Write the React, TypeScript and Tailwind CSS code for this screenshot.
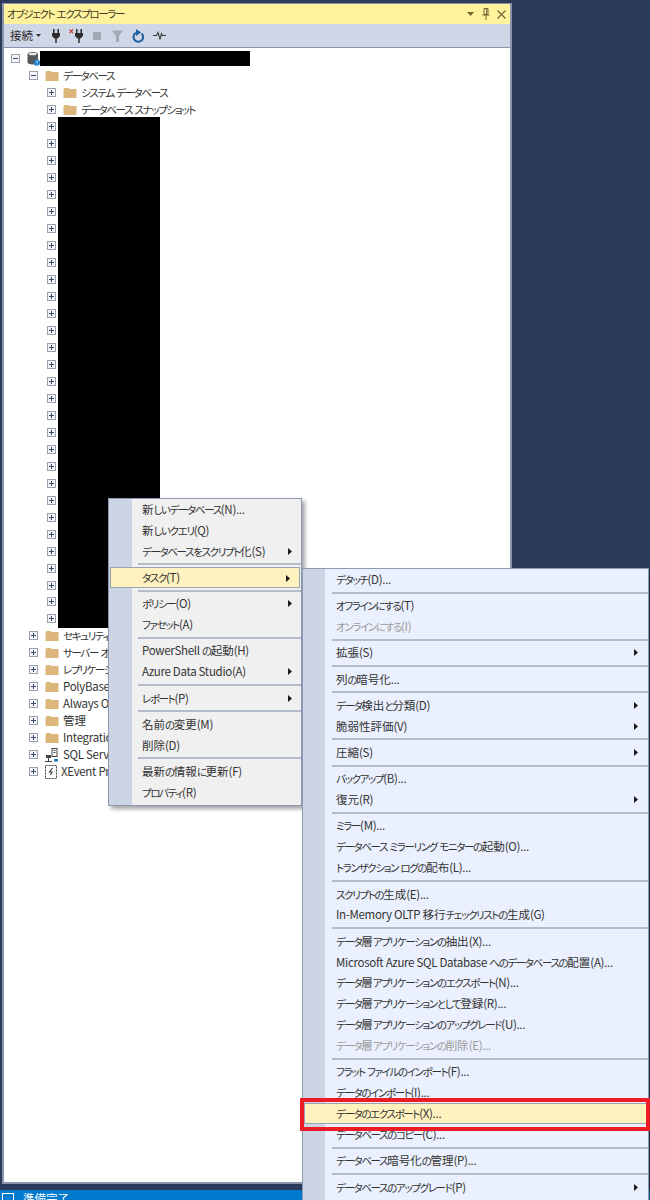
type MenuEntry =
  | { sep: true }
  | { label: string; arrow?: boolean; disabled?: boolean; active?: boolean };

const firstMenu: MenuEntry[] = [
  { label: "新しいデータベース(N)..." },
  { label: "新しいクエリ(Q)" },
  { label: "データベースをスクリプト化(S)", arrow: true },
  { sep: true },
  { label: "タスク(T)", arrow: true, active: true },
  { sep: true },
  { label: "ポリシー(O)", arrow: true },
  { label: "ファセット(A)" },
  { sep: true },
  { label: "PowerShell の起動(H)" },
  { label: "Azure Data Studio(A)", arrow: true },
  { sep: true },
  { label: "レポート(P)", arrow: true },
  { sep: true },
  { label: "名前の変更(M)" },
  { label: "削除(D)" },
  { sep: true },
  { label: "最新の情報に更新(F)" },
  { label: "プロパティ(R)" },
];

const taskMenu: MenuEntry[] = [
  { label: "デタッチ(D)..." },
  { sep: true },
  { label: "オフラインにする(T)" },
  { label: "オンラインにする(I)", disabled: true },
  { sep: true },
  { label: "拡張(S)", arrow: true },
  { sep: true },
  { label: "列の暗号化..." },
  { sep: true },
  { label: "データ検出と分類(D)", arrow: true },
  { label: "脆弱性評価(V)", arrow: true },
  { sep: true },
  { label: "圧縮(S)", arrow: true },
  { sep: true },
  { label: "バックアップ(B)..." },
  { label: "復元(R)", arrow: true },
  { sep: true },
  { label: "ミラー(M)..." },
  { label: "データベース ミラーリング モニターの起動(O)..." },
  { label: "トランザクション ログの配布(L)..." },
  { sep: true },
  { label: "スクリプトの生成(E)..." },
  { label: "In-Memory OLTP 移行チェックリストの生成(G)" },
  { sep: true },
  { label: "データ層アプリケーションの抽出(X)..." },
  { label: "Microsoft Azure SQL Database へのデータベースの配置(A)..." },
  { label: "データ層アプリケーションのエクスポート(N)..." },
  { label: "データ層アプリケーションとして登録(R)..." },
  { label: "データ層アプリケーションのアップグレード(U)..." },
  { label: "データ層アプリケーションの削除(E)...", disabled: true },
  { sep: true },
  { label: "フラット ファイルのインポート(F)..." },
  { label: "データのインポート(I)..." },
  { label: "データのエクスポート(X)...", active: true },
  { label: "データベースのコピー(C)..." },
  { sep: true },
  { label: "データベース暗号化の管理(P)..." },
  { sep: true },
  { label: "データベースのアップグレード(P)", arrow: true },
];

const bottomNodes: { label: string; icon: "folder" | "agent" | "xevent" }[] = [
  { label: "セキュリティ", icon: "folder" },
  { label: "サーバー オブジェクト", icon: "folder" },
  { label: "レプリケーション", icon: "folder" },
  { label: "PolyBase", icon: "folder" },
  { label: "Always On", icon: "folder" },
  { label: "管理", icon: "folder" },
  { label: "Integration Services", icon: "folder" },
  { label: "SQL Server エージェント", icon: "agent" },
  { label: "XEvent Profiler", icon: "xevent" },
];

// Meiryo UI has narrow kana, so kana runs get squeezed by hand
function Label({ text }: { text: string }) {
  const runs = text.match(/[\u3040-\u30ff]+|[\u0020-\u007e]+|[^\u3040-\u30ff\u0020-\u007e]+/g) ?? [];
  return (
    <span>
      {runs.map((run, i) => {
        if (/^[\u3040-\u30ff]/.test(run)) {
          return <span key={i} className="text-[10.5px] tracking-[-1.35px]">{run}</span>;
        }
        if (/^[\u0020-\u007e]/.test(run)) {
          return <span key={i} className="tracking-[-0.3px]">{run}</span>;
        }
        return <span key={i}>{run}</span>;
      })}
    </span>
  );
}

function Expander({ open }: { open?: boolean }) {
  return (
    <svg width="9" height="9" viewBox="0 0 9 9" className="flex-shrink-0">
      <rect x="0.5" y="0.5" width="8" height="8" fill="#f4f5f8" stroke="#9aa0ad" />
      <path d="M2 4.5h5" stroke="#3b4a6b" />
      {!open && <path d="M4.5 2v5" stroke="#3b4a6b" />}
    </svg>
  );
}

function Folder() {
  return (
    <svg width="14" height="12" viewBox="0 0 14 12" className="flex-shrink-0">
      <path d="M0.5 2.5 L1.5 1 H5.5 L6.5 2 H13.5 V11 H0.5 Z" fill="#dcb67a" />
    </svg>
  );
}

function AgentIcon() {
  return (
    <svg width="14" height="14" viewBox="0 0 14 14" className="flex-shrink-0">
      <rect x="7" y="0.5" width="5" height="8" fill="#fff" stroke="#424242" />
      <path d="M8.5 2.5h2M8.5 4.5h2" stroke="#424242" />
      <rect x="1" y="7" width="5" height="3" fill="#424242" />
      <path d="M0 13.5h7M3.5 10v3" stroke="#424242" />
      <path d="M9 11h4v2.5H9z" fill="#1a7bc4" />
    </svg>
  );
}

function XEventIcon() {
  return (
    <svg width="12" height="14" viewBox="0 0 12 14" className="flex-shrink-0">
      <rect x="0.5" y="0.5" width="11" height="13" fill="#fff" stroke="#424242" strokeDasharray="2 1" />
      <path d="M7.5 3 L4.5 7 H7 L5.5 10" fill="none" stroke="#424242" strokeWidth="1.2" />
    </svg>
  );
}

function ServerIcon() {
  return (
    <svg width="13" height="15" viewBox="0 0 13 15" className="flex-shrink-0">
      <path d="M0.5 3 C0.5 0.2 11 0.2 11 3 V11.5 C11 14 0.5 14 0.5 11.5 Z" fill="#55565a" />
      <ellipse cx="5.7" cy="3" rx="4.2" ry="1.3" fill="#e6e6e6" />
      <circle cx="9.8" cy="11.6" r="3.2" fill="#1c7fc9" />
      <path d="M8.9 10.6 C9.2 9.9 10.7 9.9 10.7 11 C10.7 11.7 9.8 11.7 9.8 12.4 M9.8 13v.5" fill="none" stroke="#fff" strokeWidth="0.7" />
    </svg>
  );
}

function TreeRow({ indent, open, children }: { indent: string; open?: boolean; children: React.ReactNode }) {
  return (
    <div className={`flex h-[16.97px] items-center whitespace-nowrap ${indent}`}>
      <Expander open={open} />
      {children}
    </div>
  );
}

function ToolbarIcons() {
  return (
    <div className="ml-[11px] flex items-center">
      <svg width="8" height="14" viewBox="0 0 8 14">
        <path d="M1.8 0v4M6.2 0v4" stroke="#2d2d2d" strokeWidth="1.5" />
        <path d="M0 4h8v3L5.5 9.5h-3L0 7Z" fill="#2d2d2d" />
        <path d="M4 9v5" stroke="#2d2d2d" strokeWidth="1.5" />
      </svg>
      <svg width="14" height="14" viewBox="0 0 14 14" className="ml-[9px]">
        <path d="M0.5 0.5 L4 4M4 0.5 L0.5 4" stroke="#c4453c" strokeWidth="1.1" />
        <path d="M7.8 0v4M12.2 0v4" stroke="#2d2d2d" strokeWidth="1.5" />
        <path d="M6 4h8v3L11.5 9.5h-3L6 7Z" fill="#2d2d2d" />
        <path d="M10 9v5" stroke="#2d2d2d" strokeWidth="1.5" />
      </svg>
      <div className="ml-[10px] h-[8px] w-[8px] bg-[#a5a9b3]" />
      <svg width="11" height="12" viewBox="0 0 11 12" className="ml-[11px]">
        <path d="M0 0.5h11L7 6v6H4V6Z" fill="#a5a9b3" />
      </svg>
      <svg width="12" height="14" viewBox="0 0 12 14" className="ml-[9px]">
        <path d="M4 3.8 A4.8 4.8 0 1 0 9.5 4.4" fill="none" stroke="#1c5f9e" strokeWidth="2" />
        <path d="M5 0 L5 7 L10 3.5 Z" fill="#1c5f9e" transform="translate(-1 0)" />
      </svg>
      <svg width="13" height="9" viewBox="0 0 13 9" className="ml-[9px]">
        <path d="M0 4.5h3.5L5 1.5 7 8 8.5 2.5l1 2H13" fill="none" stroke="#3a3a3a" strokeWidth="1.1" />
      </svg>
    </div>
  );
}

function ContextMenu({ items, className, gutter, text, arrowRight, tone }: {
  items: MenuEntry[];
  className: string;
  gutter: string;
  text: string;
  arrowRight: string;
  tone: string;
}) {
  return (
    <div className={`absolute overflow-hidden border border-[#8d98b3] pb-[2px] shadow-[3px_3px_4px_rgba(0,0,0,0.35)] ${tone} ${className}`}>
      <div className={`absolute inset-y-0 left-0 bg-[#cdd4e4] ${gutter}`} />
      <div className="relative">
        {items.map((item, i) =>
          "sep" in item ? (
            <div key={i} className="flex h-[5.4px] items-center">
              <div className="ml-[29px] h-[2px] flex-1 bg-[#b4bbca]" />
            </div>
          ) : (
            <div
              key={i}
              className={`relative flex h-[20.9px] items-center whitespace-nowrap ${
                item.active ? "mx-[1px] border border-[#9aa2b5] bg-[#fff2bf] pl-[31px]" : text
              } ${item.disabled ? "text-[#9b9b9b]" : "text-[#333333]"}`}
            >
              <Label text={item.label} />
              {item.arrow && (
                <svg width="4" height="7" viewBox="0 0 4 7" className={`absolute top-[7px] ${arrowRight}`}>
                  <path d="M0 0 L4 3.5 L0 7 Z" fill="#1a1a1a" />
                </svg>
              )}
            </div>
          )
        )}
      </div>
    </div>
  );
}

export default function App() {
  const jp = "font-['Noto_Sans_CJK_JP',sans-serif] text-[11.5px] [font-feature-settings:'palt']";
  const redactedRows = Array.from({ length: 30 });

  return (
    <div className={`relative flex h-[1200px] w-[650px] flex-col overflow-hidden bg-[#2b3b59] ${jp}`}>
      <div className="flex flex-1 flex-col pb-[6px] pl-[2px] pt-[3px]">
        <div className="flex h-full w-[510px] flex-col border-x-2 border-b-2 border-t border-[#8a94ad]">
          <div className="flex h-[20px] flex-shrink-0 items-center bg-[#fff29d] pl-[3px] pr-[3px] text-[#3d3a22]">
            <Label text="オブジェクト エクスプローラー" />
            <div className="ml-auto flex items-center text-[#6f6530]">
              <svg width="7" height="4" viewBox="0 0 7 4"><path d="M0 0h7L3.5 4Z" fill="currentColor" /></svg>
              <svg width="8" height="12" viewBox="0 0 8 12" className="ml-[8px]">
                <path d="M2 0.5h4v6H2ZM0.5 7h7M4 7v5M4.6 1v5" fill="none" stroke="currentColor" />
              </svg>
              <svg width="9" height="9" viewBox="0 0 9 9" className="ml-[7px] mr-[1px]">
                <path d="M0.5 0.5l8 8M8.5 0.5l-8 8" stroke="currentColor" strokeWidth="1.1" />
              </svg>
            </div>
          </div>
          <div className="flex h-[24px] flex-shrink-0 items-center border-b border-[#8a94ad] bg-[#cfd6e5] pl-[6px] text-[#2f2f2f]">
            <span>接続</span>
            <svg width="5" height="3" viewBox="0 0 5 3" className="ml-[3px]"><path d="M0 0h5L2.5 3Z" fill="#333" /></svg>
            <ToolbarIcons />
          </div>
          <div className="relative flex-1 bg-white pl-[7px] pt-[2.5px] text-[#333333]">
            <TreeRow indent="pl-0" open>
              <div className="ml-[7px]"><ServerIcon /></div>
              <div className="h-[15px] w-[210px] bg-black" />
            </TreeRow>
            <TreeRow indent="pl-[18px]" open>
              <div className="ml-[7px]"><Folder /></div>
              <span className="ml-[4px]"><Label text="データベース" /></span>
            </TreeRow>
            <TreeRow indent="pl-[36px]">
              <div className="ml-[7px]"><Folder /></div>
              <span className="ml-[4px]"><Label text="システム データベース" /></span>
            </TreeRow>
            <TreeRow indent="pl-[36px]">
              <div className="ml-[7px]"><Folder /></div>
              <span className="ml-[4px]"><Label text="データベース スナップショット" /></span>
            </TreeRow>
            {redactedRows.map((_, i) => (
              <TreeRow key={i} indent="pl-[36px]">
                <span />
              </TreeRow>
            ))}
            {bottomNodes.map((node) => (
              <TreeRow key={node.label} indent="pl-[18px]">
                <div className="ml-[7px]">
                  {node.icon === "folder" && <Folder />}
                  {node.icon === "agent" && <AgentIcon />}
                  {node.icon === "xevent" && <XEventIcon />}
                </div>
                <span className="ml-[4px]"><Label text={node.label} /></span>
              </TreeRow>
            ))}
            {/* blacked out database names */}
            <div className="absolute left-[54px] top-[69px] h-[511px] w-[102px] bg-black" />
          </div>
        </div>
      </div>
      <div className="flex h-[10px] flex-shrink-0 items-start bg-[#007acc] pl-[2px] pt-[2px] text-white">
        <div className="mt-[1px] h-[9px] w-[12px] border border-white" />
        <span className="ml-[9px] leading-[12px]">準備完了</span>
      </div>

      <ContextMenu
        items={firstMenu}
        className="left-[108px] top-[498px] w-[194px]"
        gutter="w-[23px]"
        text="pl-[33px]"
        arrowRight="right-[9px]"
        tone="bg-[#f0f0f0]"
      />
      <ContextMenu
        items={taskMenu}
        className="left-[302px] top-[568px] w-[347px]"
        gutter="w-[22px]"
        text="pl-[33px]"
        arrowRight="right-[10px]"
        tone="bg-[#eaf0fd]"
      />
      {/* red annotation round the export item */}
      <div className="absolute left-[300px] top-[1098px] h-[33px] w-[350px] border-4 border-[#ed1c24]" />
    </div>
  );
}
